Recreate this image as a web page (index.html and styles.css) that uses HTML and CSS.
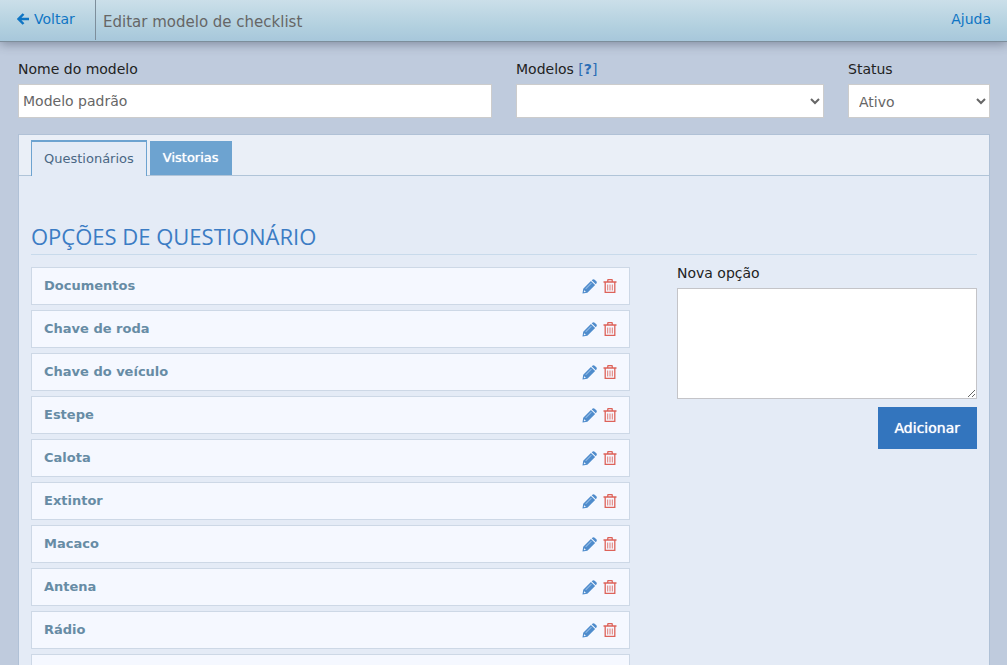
FILE: index.html
```html
<!DOCTYPE html>
<html lang="pt-BR">
<head>
<meta charset="utf-8">
<title>Editar modelo de checklist</title>
<link rel="stylesheet" href="styles.css">
</head>
<body>
<svg class="sprite" aria-hidden="true">
  <symbol id="pencil" viewBox="0 0 16 16"><path fill="#4f8ccc" d="M.5 15.500 1.300 10.300 9.500 2 14 6.500 5.700 14.700ZM10.300 1.300 11.500.400Q12.600-.2 13.500.700L15.300 2.500Q16.200 3.500 15.500 4.500L14.700 5.700Z"/><path fill="#8db8e4" d="m3.500 10.200 6.200-6.200.800.800-6.200 6.200Z"/><path fill="#f5f9ff" d="m2.300 11.900 1.800 1.800-1.200.400-1-.9Z"/></symbol>
  <symbol id="trash" viewBox="0 0 14 16"><path fill="none" stroke="#dd6259" stroke-width="1.300" d="M.5 4H13.500M4.500 3.800 5 1.600H9L9.500 3.800M2.200 4.200V14.400H11.800V4.200"/><path fill="none" stroke="#e07b74" d="M4.700 6.500V12.500M7 6.500V12.500M9.300 6.500V12.500"/></symbol>
</svg>
<header class="topbar">
  <a class="back" href="#"><svg class="arrow" viewBox="0 0 12 12" aria-hidden="true"><path d="M6.500 1 1.600 6 6.500 11M2 6H12" fill="none" stroke="currentColor" stroke-width="2.500"/></svg>Voltar</a>
  <h1 class="title">Editar modelo de checklist</h1>
  <a class="help" href="#">Ajuda</a>
</header>
<main class="page">
  <form class="fields">
    <div class="field name"><label for="nome">Nome do modelo</label><input class="control" id="nome" type="text" value="Modelo padrão"></div>
    <div class="field models"><div><label for="modelos">Modelos</label> <a class="hint" href="#">[<b>?</b>]</a></div><select class="control" id="modelos"><option></option></select></div>
    <div class="field status"><label for="status">Status</label><select class="control" id="status"><option>Ativo</option></select></div>
  </form>
  <section class="panel">
    <nav class="tabs">
      <button class="tab active" type="button">Questionários</button>
      <button class="tab" type="button">Vistorias</button>
    </nav>
    <div class="content">
      <h2 class="heading">OPÇÕES DE QUESTIONÁRIO</h2>
      <div class="columns">
        <ul class="list">
          <li class="item"><span class="name-text">Documentos</span><button class="icon" aria-label="Editar"><svg class="pencil"><use href="#pencil"/></svg></button><button class="icon" aria-label="Excluir"><svg class="trash"><use href="#trash"/></svg></button></li>
          <li class="item"><span class="name-text">Chave de roda</span><button class="icon" aria-label="Editar"><svg class="pencil"><use href="#pencil"/></svg></button><button class="icon" aria-label="Excluir"><svg class="trash"><use href="#trash"/></svg></button></li>
          <li class="item"><span class="name-text">Chave do veículo</span><button class="icon" aria-label="Editar"><svg class="pencil"><use href="#pencil"/></svg></button><button class="icon" aria-label="Excluir"><svg class="trash"><use href="#trash"/></svg></button></li>
          <li class="item"><span class="name-text">Estepe</span><button class="icon" aria-label="Editar"><svg class="pencil"><use href="#pencil"/></svg></button><button class="icon" aria-label="Excluir"><svg class="trash"><use href="#trash"/></svg></button></li>
          <li class="item"><span class="name-text">Calota</span><button class="icon" aria-label="Editar"><svg class="pencil"><use href="#pencil"/></svg></button><button class="icon" aria-label="Excluir"><svg class="trash"><use href="#trash"/></svg></button></li>
          <li class="item"><span class="name-text">Extintor</span><button class="icon" aria-label="Editar"><svg class="pencil"><use href="#pencil"/></svg></button><button class="icon" aria-label="Excluir"><svg class="trash"><use href="#trash"/></svg></button></li>
          <li class="item"><span class="name-text">Macaco</span><button class="icon" aria-label="Editar"><svg class="pencil"><use href="#pencil"/></svg></button><button class="icon" aria-label="Excluir"><svg class="trash"><use href="#trash"/></svg></button></li>
          <li class="item"><span class="name-text">Antena</span><button class="icon" aria-label="Editar"><svg class="pencil"><use href="#pencil"/></svg></button><button class="icon" aria-label="Excluir"><svg class="trash"><use href="#trash"/></svg></button></li>
          <li class="item"><span class="name-text">Rádio</span><button class="icon" aria-label="Editar"><svg class="pencil"><use href="#pencil"/></svg></button><button class="icon" aria-label="Excluir"><svg class="trash"><use href="#trash"/></svg></button></li>
          <li class="item"><span class="name-text"></span><button class="icon" aria-label="Editar"><svg class="pencil"><use href="#pencil"/></svg></button><button class="icon" aria-label="Excluir"><svg class="trash"><use href="#trash"/></svg></button></li>
        </ul>
        <form class="new-option">
          <label for="nova">Nova opção</label>
          <textarea class="textarea" id="nova"></textarea>
          <button class="add" type="button">Adicionar</button>
        </form>
      </div>
    </div>
  </section>
</main>
</body>
</html>
```
FILE: styles.css
```css
* { box-sizing: border-box; }
body {
  margin: 0;
  height: 100vh;
  overflow: hidden;
  background: #bfcbdd;
  color: #222;
  font: 14px/20px "DejaVu Sans", sans-serif;
}
button, input, select, textarea { font: inherit; border-radius: 0; }
a { color: #0f75c4; text-decoration: none; }
.sprite { display: none; }
.topbar {
  display: flex;
  align-items: flex-start;
  height: 42px;
  background: linear-gradient(#cbdfe9, #b2d0df 65%, #a7c7db);
  border-bottom: 1px solid #7d8e9b;
  box-shadow: 0 2px 10px rgba(50, 60, 80, .45);
}
.back {
  display: flex;
  align-items: center;
  gap: 5px;
  width: 96px;
  height: 40px;
  padding: 0 0 2px 17px;
  border-right: 1px solid #7d8e9b;
}
.arrow { width: 12px; height: 12px; }
.title {
  flex: 1;
  margin: 0;
  padding: 12px 7px 0;
  color: #666;
  font-size: 15px;
  font-weight: 400;
}
.help { padding: 9px 16px 0 0; }
.page { padding: 17px 17px 0 18px; }
.fields {
  display: grid;
  grid-template-columns: 474fr 308fr 142fr;
  gap: 24px;
}
.field { display: flex; flex-direction: column; gap: 5px; min-width: 0; }
.hint { color: #2c6db5; }
.control {
  width: 100%;
  height: 34px;
  padding: 0 4px;
  border: 1px solid #ccc;
  background: #fff;
  color: #666;
}
select.control { padding: 1px 2px 0 6px; }
.panel {
  min-height: 100vh;
  margin-top: 16px;
  border: 1px solid #b0c1d6;
  background: #e4ebf6;
}
.tabs {
  display: flex;
  align-items: flex-end;
  gap: 3px;
  height: 41px;
  padding: 0 12px;
  border-bottom: 1px solid #b0c4d8;
  background: #eaeff7;
}
.tab {
  height: 34px;
  padding: 0 13px;
  border: 0;
  background: #6da3d0;
  color: #fff;
  font-size: 13px;
  text-shadow: 0 0 1px #fff;
}
.tab.active {
  height: 36px;
  margin-bottom: -1px;
  padding: 0 12px;
  border: 1px solid #6da3d0;
  border-top-width: 2px;
  border-bottom: 0;
  background: #e4ebf6;
  color: #4a6784;
  text-shadow: none;
}
.content { padding: 44px 12px 0; }
.heading {
  margin: 0 0 12px;
  padding-bottom: 2px;
  border-bottom: 1px solid #c8daeb;
  color: #3b7cc4;
  font: 400 22px/32px "Open Sans", sans-serif;
}
.columns {
  display: grid;
  grid-template-columns: 599fr 300fr;
  gap: 47px;
  align-items: start;
}
.list { display: grid; gap: 5px; margin: 0; padding: 0; list-style: none; }
.item {
  display: flex;
  align-items: center;
  height: 38px;
  padding: 0 12px;
  border: 1px solid #cdd8e6;
  background: #f5f8ff;
  color: #678ca5;
  font-size: 13px;
  font-weight: 700;
}
.name-text { flex: 1; }
.icon { display: flex; margin-left: 6px; padding: 0; border: 0; background: none; }
.pencil { width: 15px; height: 15px; }
.trash { width: 14px; height: 16px; }
.new-option { display: flex; flex-direction: column; gap: 5px; margin-top: -4px; }
.textarea {
  height: 111px;
  border: 1px solid #c4c4c8;
  background: #fff;
  resize: both;
}
.add {
  align-self: flex-end;
  height: 42px;
  margin-top: 3px;
  padding: 0 17px;
  border: 0;
  background: #3375be;
  color: #fff;
  text-shadow: 0 0 1px #fff;
}
```
